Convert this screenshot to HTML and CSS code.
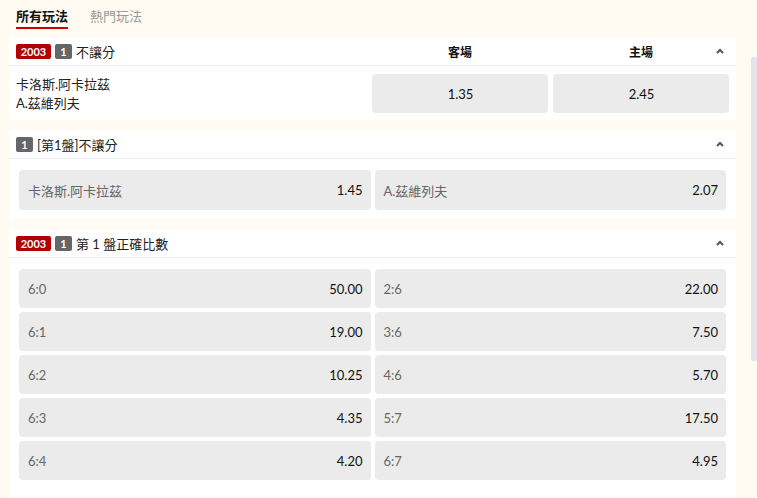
FILE: index.html
```html
<html>

<head>
    <title>所有玩法</title>
    <link rel="stylesheet" href="styles.css">
</head>

<body>
    <div class="page">
        <div class="main">
            <div class="tabs">
                <div class="tab active">所有玩法</div>
                <div class="tab">熱門玩法</div>
            </div>

            <div class="panel">
                <div class="head grid3">
                    <div class="title"><span class="badge red">2003</span><span class="badge grey">1</span>不讓分</div>
                    <div class="colname">客場</div>
                    <div class="colname">主場</div>
                    <svg class="caret" width="8" height="6" viewBox="0 0 8 6"><path d="M1 5 L4 2 L7 5" fill="none" stroke="#555" stroke-width="2"/></svg>
                </div>
                <div class="matchrow grid3">
                    <div class="names">卡洛斯.阿卡拉茲<br>A.茲維列夫</div>
                    <div class="btn center">1.35</div>
                    <div class="btn center">2.45</div>
                </div>
            </div>

            <div class="panel">
                <div class="head">
                    <div class="title"><span class="badge grey">1</span>[第1盤]不讓分</div>
                    <svg class="caret" width="8" height="6" viewBox="0 0 8 6"><path d="M1 5 L4 2 L7 5" fill="none" stroke="#555" stroke-width="2"/></svg>
                </div>
                <div class="odds">
                    <div class="btn tall"><span class="lbl">卡洛斯.阿卡拉茲</span><span class="val">1.45</span></div>
                    <div class="btn tall"><span class="lbl">A.茲維列夫</span><span class="val">2.07</span></div>
                </div>
            </div>

            <div class="panel last">
                <div class="head">
                    <div class="title"><span class="badge red">2003</span><span class="badge grey">1</span>第 1 盤正確比數</div>
                    <svg class="caret" width="8" height="6" viewBox="0 0 8 6"><path d="M1 5 L4 2 L7 5" fill="none" stroke="#555" stroke-width="2"/></svg>
                </div>
                <div class="odds">
                    <div class="btn"><span class="lbl">6:0</span><span class="val">50.00</span></div>
                    <div class="btn"><span class="lbl">2:6</span><span class="val">22.00</span></div>
                    <div class="btn"><span class="lbl">6:1</span><span class="val">19.00</span></div>
                    <div class="btn"><span class="lbl">3:6</span><span class="val">7.50</span></div>
                    <div class="btn"><span class="lbl">6:2</span><span class="val">10.25</span></div>
                    <div class="btn"><span class="lbl">4:6</span><span class="val">5.70</span></div>
                    <div class="btn"><span class="lbl">6:3</span><span class="val">4.35</span></div>
                    <div class="btn"><span class="lbl">5:7</span><span class="val">17.50</span></div>
                    <div class="btn"><span class="lbl">6:4</span><span class="val">4.20</span></div>
                    <div class="btn"><span class="lbl">6:7</span><span class="val">4.95</span></div>
                </div>
            </div>
        </div>
        <div class="side"></div>
    </div>
</body>

</html>
```

FILE: styles.css
```css
body {
    margin: 0;
    background-color: #fffbf2;
    font-family: Lato, "Noto Sans CJK TC", sans-serif;
    font-size: 13px;
    color: #222;
    overflow: hidden;
}

.page {
    display: flex;
    height: 498px;
}

.main {
    width: 727px;
    margin-left: 9px;
}

.side {
    width: 6px;
    height: 304px;
    margin-top: 57px;
    margin-left: 15px;
    background-color: #e4e4e9;
    border-radius: 3px 0 0 3px;
}

.tabs {
    display: flex;
    gap: 22px;
    padding-left: 7px;
    height: 37px;
}

.tab {
    padding-top: 6px;
    height: 21px;
    color: #999;
    font-size: 13px;
}

.tab.active {
    color: #111;
    font-weight: bold;
    border-bottom: 2px solid #c00;
}

.panel {
    background-color: #fff;
    margin-bottom: 10px;
}

.panel.last {
    height: 269px;
    margin-bottom: 0;
}

.head {
    position: relative;
    height: 28px;
    border-bottom: 1px solid #ebebf3;
    display: flex;
    align-items: center;
    padding-left: 7px;
}

.grid3 {
    display: grid;
    grid-template-columns: 1fr 176px 176px;
    column-gap: 5px;
    padding: 0 7px;
}

.head.grid3 {
    height: 28px;
    align-items: center;
}

.title {
    display: flex;
    align-items: center;
    font-size: 13px;
    color: #222;
}

.badge {
    display: inline-block;
    height: 15px;
    line-height: 15px;
    font-size: 11px;
    font-weight: bold;
    color: #fff;
    border-radius: 2px;
    margin-right: 4px;
    text-align: center;
}

.badge.red {
    background-color: #b40000;
    width: 35px;
}

.badge.grey {
    background-color: #666;
    width: 17px;
}

.colname {
    text-align: center;
    font-size: 12px;
    font-weight: bold;
    color: #111;
}

.caret {
    position: absolute;
    right: 12px;
    top: 11px;
}

.matchrow {
    padding-top: 8px;
    padding-bottom: 7px;
    align-items: center;
}

.names {
    line-height: 19px;
    color: #222;
}

.odds {
    display: grid;
    grid-template-columns: 1fr 1fr;
    column-gap: 4px;
    row-gap: 4px;
    padding: 11px 10px 9px 10px;
}

.btn {
    height: 39px;
    background-color: #ebebeb;
    border-radius: 4px;
    display: flex;
    align-items: center;
    justify-content: space-between;
    padding: 0 8px 0 9px;
    font-size: 13px;
}

.btn.tall {
    height: 40px;
}

.btn.center {
    justify-content: center;
    color: #111;
}

.lbl {
    color: #666;
}

.val {
    color: #111;
}
```
